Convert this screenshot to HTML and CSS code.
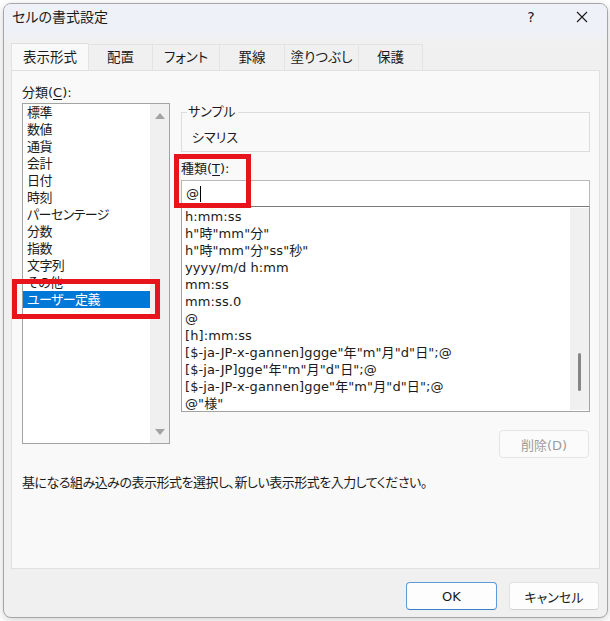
FILE: index.html
```html
<!DOCTYPE html>
<html lang="ja">
<head>
<meta charset="utf-8">
<title>セルの書式設定</title>
<link rel="stylesheet" href="styles.css">
</head>
<body>
<div class="window">
  <div class="titlebar">
    <span class="title">セルの書式設定</span>
    <span class="help">?</span>
    <span class="close"><svg width="12" height="12" viewBox="0 0 12 12"><path d="M1 1 L11 11 M11 1 L1 11" stroke="#1a1a1a" stroke-width="1.1" fill="none"/></svg></span>
  </div>
  <div class="content">
    <div class="tabs">
      <div class="tab active t1">表示形式</div>
      <div class="tab t2">配置</div>
      <div class="tab t3">フォント</div>
      <div class="tab t4">罫線</div>
      <div class="tab t5">塗りつぶし</div>
      <div class="tab t6 last">保護</div>
    </div>
    <div class="panel">
      <div class="cols">
        <div class="left">
          <div class="label">分類(<u>C</u>):</div>
          <div class="listbox cat">
            <ul class="items">
              <li>標準</li>
              <li>数値</li>
              <li>通貨</li>
              <li>会計</li>
              <li>日付</li>
              <li>時刻</li>
              <li>パーセンテージ</li>
              <li>分数</li>
              <li>指数</li>
              <li>文字列</li>
              <li>その他</li>
              <li class="selected">ユーザー定義</li>
            </ul>
            <div class="vscroll arrows">
              <span class="arrow up"></span>
              <span class="arrow down"></span>
            </div>
          </div>
        </div>
        <div class="right">
          <fieldset class="sample">
            <legend>サンプル</legend>
            <div class="sample-value">シマリス</div>
          </fieldset>
          <div class="label type-label">種類(<u>T</u>):</div>
          <div class="input">@<span class="caret"></span></div>
          <div class="listbox formats">
            <ul class="items">
              <li>h:mm:ss</li>
              <li>h"時"mm"分"</li>
              <li>h"時"mm"分"ss"秒"</li>
              <li>yyyy/m/d h:mm</li>
              <li>mm:ss</li>
              <li>mm:ss.0</li>
              <li>@</li>
              <li>[h]:mm:ss</li>
              <li>[$-ja-JP-x-gannen]ggge"年"m"月"d"日";@</li>
              <li>[$-ja-JP]gge"年"m"月"d"日";@</li>
              <li>[$-ja-JP-x-gannen]gge"年"m"月"d"日";@</li>
              <li>@"様"</li>
            </ul>
            <div class="vscroll thin"><span class="thumb"></span></div>
          </div>
          <div class="del-row"><button class="btn disabled">削除(D)</button></div>
        </div>
      </div>
      <p class="desc">基になる組み込みの表示形式を選択し、新しい表示形式を入力してください。</p>
    </div>
    <div class="footer">
      <button class="btn default ok">OK</button>
      <button class="btn cancel">キャンセル</button>
    </div>
  </div>
  <div class="mark mark-cat"></div>
  <div class="mark mark-type"></div>
</div>
</body>
</html>
```

FILE: styles.css
```css
* { box-sizing: border-box; }
html, body { margin: 0; padding: 0; }
body {
  width: 610px;
  height: 621px;
  background: #ffffff;
  font-family: "DejaVu Sans", "Noto Sans CJK JP", sans-serif;
  font-size: 13px;
  color: #1a1a1a;
  font-feature-settings: "palt";
  overflow: hidden;
}
.window {
  position: relative;
  margin: 3px 0 0 3px;
  width: 605px;
  height: 615px;
  border: 1px solid #a6a6a6;
  border-radius: 8px;
  background: #f0f0f0;
  box-shadow: 0 2px 8px rgba(0,0,0,0.18);
  overflow: hidden;
}
.titlebar {
  height: 28px;
  display: flex;
  align-items: center;
  background: #eef2f8;
  padding-left: 8px;
}
.title { font-size: 14px; flex: 1; line-height: 28px; margin-top: -2px; }
.help { width: 14px; text-align: center; font-size: 14px; margin-right: 38px; margin-top: -2px; color: #1a1a1a; }
.close { width: 12px; height: 12px; margin-right: 19px; margin-top: -3px; display: flex; }
.content {
  padding: 12px 7px 0 7px;
  background: linear-gradient(#eef2f8, #f0f0f0 12px);
}
.tabs { display: flex; height: 26px; }
.tab {
  height: 26px;
  border-top: 1px solid #e3e3e3;
  border-left: 1px solid #e3e3e3;
  background: #f0f0f0;
  display: flex;
  align-items: center;
  justify-content: center;
  font-size: 13.5px;
  line-height: 17px;
}
.tab.last { border-right: 1px solid #e3e3e3; }
.tab.active {
  background: #f9f9f9;
  height: 27px;
  margin-top: -1px;
  position: relative;
  z-index: 1;
  margin-bottom: -1px;
  border-top-color: #dedede;
  padding-top: 1px;
}
.t1 { width: 77px; }
.t2 { width: 64px; }
.t3 { width: 67px; }
.t4 { width: 65px; }
.t5 { width: 74px; }
.t6 { width: 65px; }
.panel {
  height: 499px;
  border: 1px solid #e0e0e0;
  background: #f9f9f9;
  padding: 13px 9px 0 10px;
}
.cols { display: flex; gap: 11px; }
.left { width: 148px; }
.right { width: 409px; }
.label { line-height: 17px; height: 17px; }
u { text-decoration-thickness: 1px; text-underline-offset: 2px; }
.listbox {
  position: relative;
  display: flex;
  border: 1px solid #a3a3a3;
  background: #ffffff;
  overflow: hidden;
}
.items { list-style: none; margin: 0; padding: 0; flex: 1; }
.items li { line-height: 17px; height: 17px; white-space: nowrap; }
.cat { margin-top: 2px; height: 341px; }
.cat .items li { padding-left: 4px; letter-spacing: -0.6px; }
.cat .items li.selected { background: #0078d7; color: #ffffff; }
.vscroll {
  width: 19px;
  background: #f0f0f0;
  display: flex;
  flex-direction: column;
  align-items: center;
}
.arrows { justify-content: space-between; padding: 9px 0 8px; }
.arrow { width: 0; height: 0; border-left: 5px solid transparent; border-right: 5px solid transparent; }
.arrow.up { border-bottom: 6px solid #a3a3a3; }
.arrow.down { border-top: 6px solid #a3a3a3; }
.sample {
  margin: 20px 0 0 0;
  padding: 0 0 5px 5px;
  border: 1px solid #dcdcdc;
  min-width: 0;
}
.sample legend { padding: 0 2px 0 1px; line-height: 16px; font-size: 13px; }
.sample-value { margin: 9px 0 0 5px; line-height: 17px; }
.type-label { margin-top: 8px; }
.input {
  margin-top: 3px;
  height: 27px;
  border: 1px solid #b9b9b9;
  border-bottom-color: #7a7a7a;
  background: #ffffff;
  padding-left: 4px;
  display: flex;
  align-items: center;
  line-height: 17px;
}
.caret { display: inline-block; width: 1px; height: 16px; background: #000; margin-left: 1px; }
.formats {
  height: 205px;
  border-top: none;
}
.formats .items { padding-top: 1px; }
.formats .items li { padding-left: 3px; letter-spacing: 0.1px; }
.thin { margin: 1px 0 0; height: 202px; position: relative; width: 19px; }
.thumb {
  position: absolute;
  left: 8px;
  top: 145px;
  width: 3px;
  height: 38px;
  border-radius: 2px;
  background: #868686;
}
.del-row { display: flex; justify-content: flex-end; margin-top: 18px; padding-right: 1px; }
.btn {
  font-family: inherit;
  font-size: 13px;
  font-feature-settings: "palt";
  height: 28px;
  border: 1px solid #e2e2e2;
  border-bottom-color: #cfcfcf;
  border-radius: 4px;
  background: #fdfdfd;
  color: #1a1a1a;
  padding: 0;
}
.btn.disabled { width: 90px; color: #9d9d9d; background: #fbfbfb; border-color: #e5e5e5; }
.desc { margin: 16px 0 0 0; line-height: 17px; letter-spacing: -0.5px; }
.footer {
  display: flex;
  justify-content: flex-end;
  gap: 12px;
  margin-top: 13px;
  padding-right: 1px;
}
.ok { width: 91px; border: 1px solid #5c9ad8; border-bottom-color: #3a7fc8; }
.cancel { width: 90px; }
.mark {
  position: absolute;
  border: 5px solid #e8141c;
}
.mark-cat { left: 8px; top: 275px; width: 148px; height: 40px; }
.mark-type { left: 170px; top: 150px; width: 77px; height: 54px; }
```
